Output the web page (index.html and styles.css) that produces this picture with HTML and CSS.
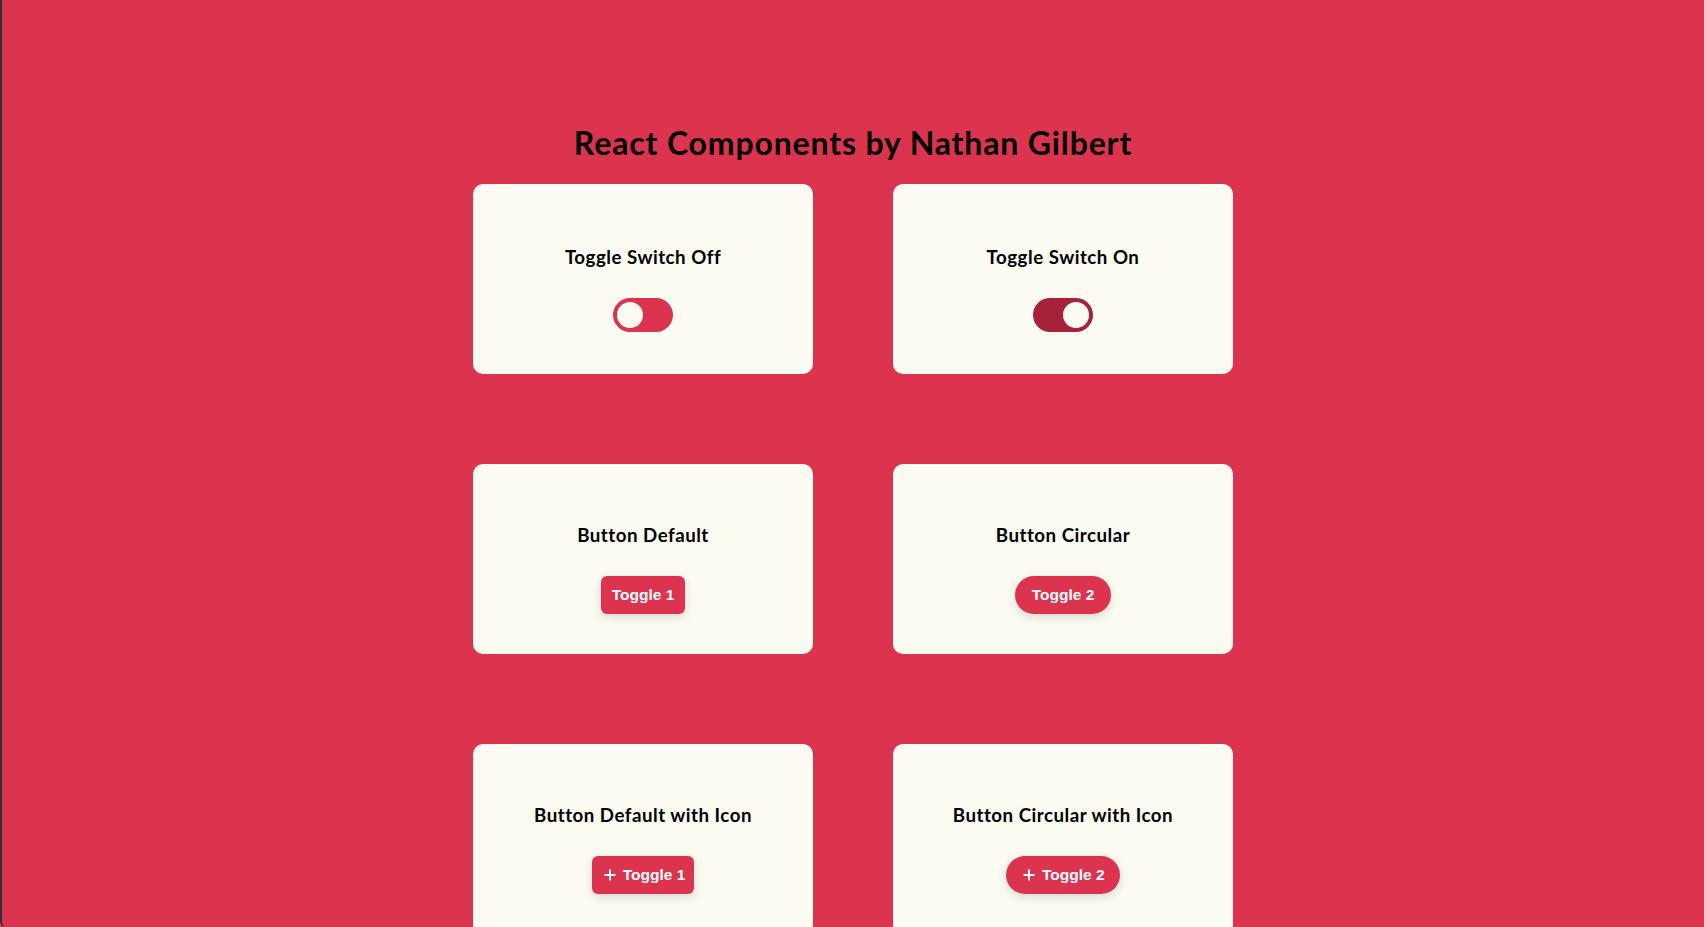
FILE: index.html
```html
<!DOCTYPE html>
<html lang="en">
<head>
<meta charset="utf-8">
<title>React Components by Nathan Gilbert</title>
<link rel="stylesheet" href="styles.css">
</head>
<body>
<main class="page">
  <h1 class="page-title">React Components by Nathan Gilbert</h1>
  <div class="grid">
    <section class="card">
      <h3 class="card-title">Toggle Switch Off</h3>
      <div class="switch"><span class="knob"></span></div>
    </section>
    <section class="card">
      <h3 class="card-title">Toggle Switch On</h3>
      <div class="switch switch-on"><span class="knob"></span></div>
    </section>
    <section class="card">
      <h3 class="card-title">Button Default</h3>
      <button class="btn">Toggle 1</button>
    </section>
    <section class="card">
      <h3 class="card-title">Button Circular</h3>
      <button class="btn btn-round">Toggle 2</button>
    </section>
    <section class="card">
      <h3 class="card-title">Button Default with Icon</h3>
      <button class="btn btn-icon"><svg class="plus" width="12" height="12" viewBox="0 0 12 12"><path d="M6 0.5V11.5M0.5 6H11.5" stroke="#fff" stroke-width="2" fill="none"/></svg>Toggle 1</button>
    </section>
    <section class="card">
      <h3 class="card-title">Button Circular with Icon</h3>
      <button class="btn btn-round btn-icon"><svg class="plus" width="12" height="12" viewBox="0 0 12 12"><path d="M6 0.5V11.5M0.5 6H11.5" stroke="#fff" stroke-width="2" fill="none"/></svg>Toggle 2</button>
    </section>
  </div>
</main>
</body>
</html>
```

FILE: styles.css
```css
html, body {
  margin: 0;
  height: 100%;
}
body {
  background: #dc334f;
  border-left: 2px solid #28323c;
  border-bottom-left-radius: 6px;
  box-sizing: border-box;
  overflow: hidden;
  font-family: Lato, "Open Sans", sans-serif;
  color: #000;
}
.page {
  display: flex;
  flex-direction: column;
  align-items: center;
  padding-top: 121px;
}
.page-title {
  margin: 0 0 20px;
  font-size: 32px;
  line-height: 43px;
  font-weight: 700;
  letter-spacing: 0.85px;
}
.grid {
  display: grid;
  grid-template-columns: 340px 340px;
  column-gap: 80px;
  row-gap: 90px;
}
.card {
  height: 190px;
  background: #fcfbf2;
  border-radius: 10px;
  display: flex;
  flex-direction: column;
  align-items: center;
  justify-content: center;
}
.card-title {
  margin: 19px 0 28px;
  font-size: 18.72px;
  line-height: 25px;
  font-weight: 700;
  letter-spacing: 0.5px;
}
.switch {
  width: 60px;
  height: 34px;
  border-radius: 17px;
  background: #dc334f;
  box-sizing: border-box;
  padding: 4px;
  display: flex;
  justify-content: flex-start;
}
.switch-on {
  background: #a6223a;
  justify-content: flex-end;
}
.knob {
  width: 26px;
  height: 26px;
  border-radius: 50%;
  background: #fcfbf2;
}
.btn {
  display: inline-flex;
  align-items: center;
  justify-content: center;
  height: 38px;
  padding: 0 11px;
  border: none;
  border-radius: 6px;
  background: #dc334f;
  color: #fff;
  font-family: "Liberation Sans", Arial, sans-serif;
  font-weight: 700;
  font-size: 15.5px;
  box-shadow: 0 3px 10px rgba(0, 0, 0, 0.14);
  cursor: pointer;
}
.btn-round {
  border-radius: 19px;
  padding: 0 16.5px;
}
.btn-icon {
  gap: 7px;
  padding: 0 9px 0 12px;
}
.btn-round.btn-icon {
  padding: 0 15.5px 0 17px;
}
.plus {
  display: block;
}
```
